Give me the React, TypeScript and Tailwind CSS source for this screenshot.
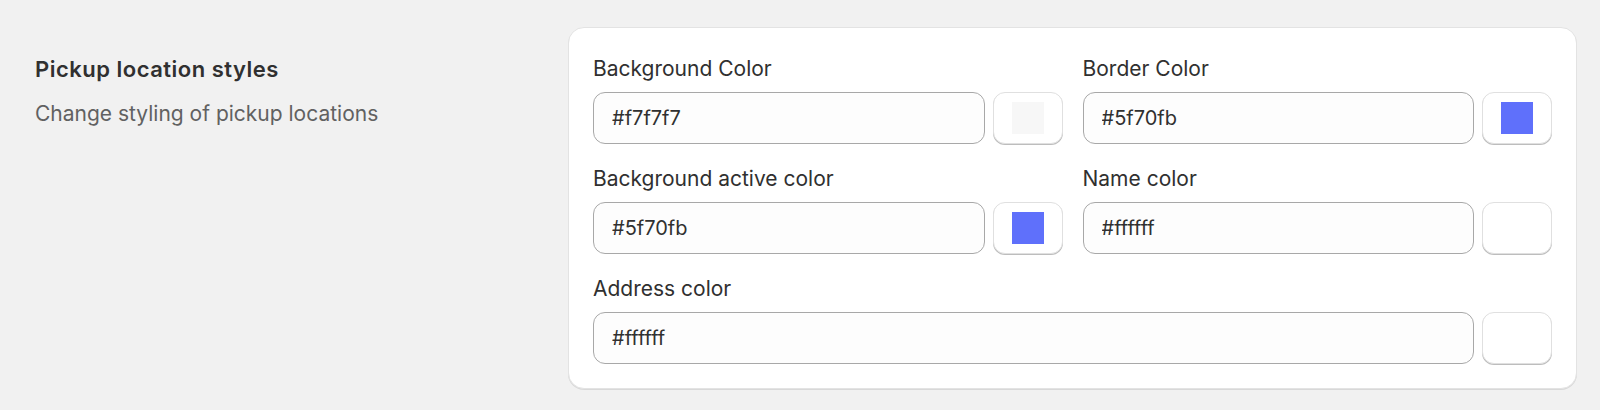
import { useState } from "react";

interface ColorField {
  key: string;
  label: string;
  value: string;
  wide?: boolean;
}

const FIELDS: ColorField[] = [
  { key: "bg", label: "Background Color", value: "#f7f7f7" },
  { key: "border", label: "Border Color", value: "#5f70fb" },
  { key: "bgActive", label: "Background active color", value: "#5f70fb" },
  { key: "name", label: "Name color", value: "#ffffff" },
  { key: "address", label: "Address color", value: "#ffffff", wide: true },
];

export default function App() {
  const [values, setValues] = useState<Record<string, string>>(
    Object.fromEntries(FIELDS.map(f => [f.key, f.value]))
  );

  const handleChange = (key: string, value: string) => {
    setValues(prev => ({ ...prev, [key]: value }));
  };

  return (
    <div
      className="min-h-[410px] bg-[#f1f1f1] pt-[27px] pl-[35px] pr-[23px] text-[#303030] antialiased"
      style={{ fontFamily: "Inter, 'Noto Sans', sans-serif" }}
    >
      <div className="flex">
        <div className="w-[533px] shrink-0 pt-[28px]">
          <h2 className="text-[22px] font-semibold leading-7 tracking-[0.5px] text-[#303030]">
            Pickup location styles
          </h2>
          <p className="mt-[17px] text-[21px] leading-7 text-[#616161]">
            Change styling of pickup locations
          </p>
        </div>

        <div className="flex-1 rounded-2xl border border-[#e3e3e3] bg-white px-6 pt-[25px] pb-6 shadow-[0_1px_0_rgba(0,0,0,0.1)]">
          <div className="grid grid-cols-2 gap-x-5 gap-y-[19px]">
            {FIELDS.map(field => {
              const v = values[field.key];
              return (
                <div key={field.key} className={field.wide ? "col-span-2" : ""}>
                  <label className="block text-[21px] leading-8 text-[#303030]">
                    {field.label}
                  </label>
                  <div className="mt-[7px] flex gap-2">
                    <input
                      type="text"
                      value={v}
                      onChange={e => handleChange(field.key, e.target.value)}
                      className="h-[52px] min-w-0 flex-1 rounded-xl border border-[#a8a8a8] bg-[#fdfdfd] px-[18px] text-[20px] text-[#303030] outline-none"
                    />
                    <button
                      type="button"
                      className="flex h-[52px] w-[70px] shrink-0 items-center justify-center rounded-xl border border-[#e0e0e0] bg-white shadow-[0_1px_0_#bdbdbd]"
                    >
                      <span className="block h-8 w-8" style={{ backgroundColor: v }} />
                    </button>
                  </div>
                </div>
              );
            })}
          </div>
        </div>
      </div>
    </div>
  );
}
